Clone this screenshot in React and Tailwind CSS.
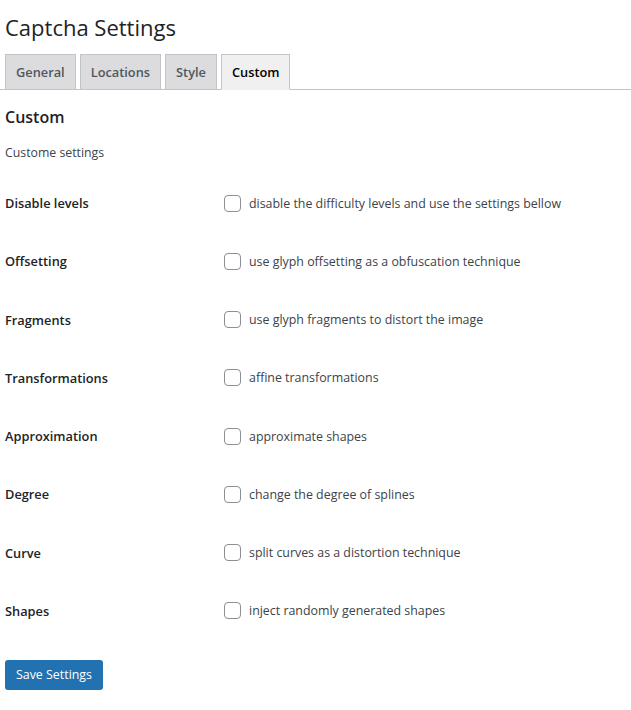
import React from 'react';

const rows = [
  ['Disable levels', 'disable the difficulty levels and use the settings bellow'],
  ['Offsetting', 'use glyph offsetting as a obfuscation technique'],
  ['Fragments', 'use glyph fragments to distort the image'],
  ['Transformations', 'affine transformations'],
  ['Approximation', 'approximate shapes'],
  ['Degree', 'change the degree of splines'],
  ['Curve', 'split curves as a distortion technique'],
  ['Shapes', 'inject randomly generated shapes'],
];

const tabs = ['General', 'Locations', 'Style', 'Custom'];

export default function App() {
  return (
    <div className="min-h-screen bg-white text-[#1d2327] font-['Open_Sans','Noto_Sans',sans-serif]">
      <h1 className="pl-[5px] pt-[13px] text-[22px] leading-[29px] font-normal">Captcha Settings</h1>

      <nav className="mt-[12px] flex gap-[4px] pl-[5px] border-b border-[#c3c4c7]">
        {tabs.map((tab) => {
          const active = tab === 'Custom';
          return (
            <span
              key={tab}
              className={
                active
                  ? 'mb-[-1px] px-[10px] py-[5px] text-[12.8px] leading-[24px] font-semibold border border-[#c3c4c7] border-b-[#f0f0f1] bg-[#f0f0f1] text-black'
                  : 'px-[10px] py-[5px] text-[12.8px] leading-[24px] font-semibold border border-[#c3c4c7] border-b-0 bg-[#dcdcde] text-[#50575e]'
              }
            >
              {tab}
            </span>
          );
        })}
      </nav>

      <div className="pl-[5px]">
        <h2 className="mt-[15px] text-[16px] leading-[24px] font-semibold">Custom</h2>
        <p className="mt-[14px] text-[12.3px] leading-[20px] text-[#3c434a]">Custome settings</p>

        <div className="mt-[11px] flex flex-col">
          {rows.map(([label, desc]) => (
            <div key={label} className="h-[58.25px] flex items-center">
              <span className="w-[219px] shrink-0 text-[12.8px] leading-[20px] font-semibold text-[#1d2327]">{label}</span>
              <label className="flex items-center gap-[8px] text-[12.4px] leading-[20px] text-[#3c434a]">
                <span className="w-[17px] h-[17px] rounded-[4px] border border-[#8c8f94] bg-white" />
                <span className="pt-[1px]">{desc}</span>
              </label>
            </div>
          ))}
        </div>

        <button className="mt-[20px] h-[30px] px-[11px] rounded-[3px] bg-[#2271b1] text-white text-[12.4px] leading-[28px]">
          Save Settings
        </button>
      </div>
    </div>
  );
}
